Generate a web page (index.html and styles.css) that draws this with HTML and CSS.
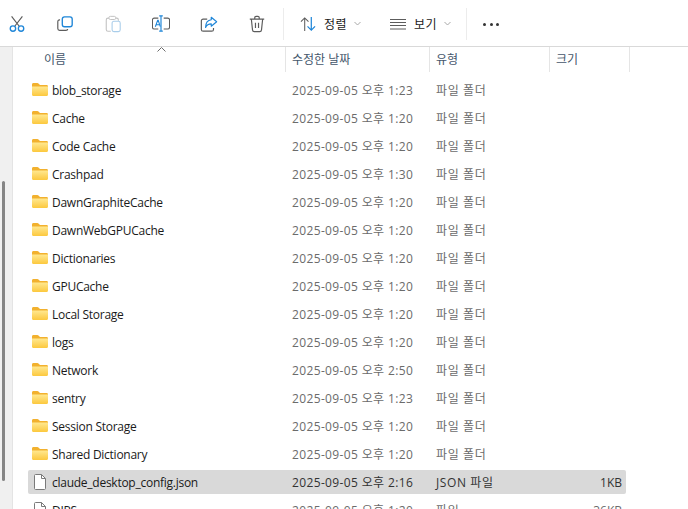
FILE: index.html
```html
<!DOCTYPE html>
<html lang="ko">
<head>
<meta charset="utf-8">
<title>탐색기</title>
<link rel="stylesheet" href="styles.css">
</head>
<body>
<svg class="defs" width="0" height="0" aria-hidden="true">
  <defs>
    <linearGradient id="fg" x1="0" y1="0" x2="0" y2="1"><stop offset="0" stop-color="#ffe88f"/><stop offset="1" stop-color="#fcc83e"/></linearGradient>
    <symbol id="folder" viewBox="0 0 16 13">
      <path d="M0 1.5C0 .7.6 0 1.4 0h4c.4 0 .8.2 1.1.5L8 2h6.6c.8 0 1.4.6 1.4 1.4V5H0z" fill="#f2b12e"/>
      <path d="M0 3.6h16v7.9c0 .8-.6 1.5-1.4 1.5H1.4C.6 13 0 12.300 0 11.500z" fill="url(#fg)"/>
    </symbol>
    <symbol id="file" viewBox="0 0 12 16">
      <path d="M.5 1.500c0-.6.4-1 1-1h6l4 4v10c0 .6-.4 1-1 1h-9c-.6 0-1-.4-1-1z" fill="#fff" stroke="#7a7a7a"/>
      <path d="M7.500.5v4h4" fill="none" stroke="#7a7a7a"/>
    </symbol>
  </defs>
</svg>
<header class="toolbar">
  <div class="btn"><svg width="18" height="18" viewBox="0 0 20 20" fill="none"><path d="M4 1.500 12.500 12.500M16 1.500 7.500 12.500" stroke="#5c5c5c" stroke-width="1.300"/><circle cx="5.500" cy="15" r="3" stroke="#1f86d8" stroke-width="1.500"/><circle cx="14.500" cy="15" r="3" stroke="#1f86d8" stroke-width="1.500"/></svg></div>
  <div class="btn"><svg width="18" height="18" viewBox="0 0 20 20" fill="none"><path d="M4.500 5.500H4c-1.300 0-2 .8-2 2V15c0 1.300.8 2 2 2h7c1.300 0 2-.7 2-1.500" stroke="#5c5c5c" stroke-width="1.300"/><rect x="7" y="2" width="11" height="11" rx="2.500" fill="#fff" stroke="#1f86d8" stroke-width="1.500"/></svg></div>
  <div class="btn"><svg width="18" height="18" viewBox="0 0 20 20" fill="none"><path d="M5.500 3.500H4.500c-1.200 0-2 .8-2 2V16c0 1.200.8 2 2 2h3M13 3.500h1c1.200 0 2 .8 2 2v1" stroke="#c2c2c2" stroke-width="1.200"/><rect x="5.500" y="1.500" width="7.500" height="3.500" rx="1.500" fill="#fff" stroke="#c2c2c2" stroke-width="1.100"/><rect x="9" y="7" width="9" height="11.500" rx="2" fill="#fff" stroke="#a9cdea" stroke-width="1.200"/></svg></div>
  <div class="btn"><svg width="18" height="18" viewBox="0 0 20 20" fill="none"><path d="M7 3.500H2.500C1.300 3.500.5 4.300.5 5.500v8c0 1.200.8 2 2 2H7M13 3.500h4.500c1.200 0 2 .8 2 2v8c0 1.200-.8 2-2 2H13" stroke="#5c5c5c" stroke-width="1.200"/><path d="M10 1v17M8 1h4M8 18h4" stroke="#1f86d8" stroke-width="1.300"/><path d="M3.700 13 6.300 6h.6l2.300 7M4.700 10.800h3.800" stroke="#1f86d8" stroke-width="1.200"/></svg></div>
  <div class="btn"><svg width="18" height="18" viewBox="0 0 20 20" fill="none"><path d="M8 4.500H3.500c-1.200 0-2 .8-2 2V16c0 1.200.8 2 2 2h9.500c1.200 0 2-.8 2-2v-1.500" stroke="#5c5c5c" stroke-width="1.300"/><path d="M12.500 2.500 18.500 7.500 12.500 12.500V9.800C9.500 9.800 7.500 11 6.200 13.800 6.300 9.200 8.500 5.700 12.500 5.300z" fill="#fff" stroke="#1f86d8" stroke-width="1.300" stroke-linejoin="round"/></svg></div>
  <div class="btn"><svg width="18" height="18" viewBox="0 0 20 20" fill="none"><path d="M2 4.500h16M7.500 4.500V3c0-.9.600-1.500 1.500-1.500h2c.9 0 1.500.6 1.500 1.500v1.500M3.700 4.500 5 16.500c.1 1.200.9 2 2 2h6c1.100 0 1.900-.8 2-2l1.300-12M8.300 8.500v6M11.700 8.500v6" stroke="#5c5c5c" stroke-width="1.300"/></svg></div>
  <span class="sep first"></span>
  <div class="menu sort">
    <svg width="16" height="16" viewBox="0 0 17 17" fill="none"><path d="M5 16V2M1 6l4-4 4 4" stroke="#5c5c5c" stroke-width="1.100"/><path d="M12 1v14M8 11l4 4 4-4" stroke="#1f86d8" stroke-width="1.300"/></svg>
    <span class="label">정렬</span>
    <svg class="chev" width="7" height="5" viewBox="0 0 7 5" fill="none"><path d="M.5 1 3.500 4 6.500 1" stroke="#a8a8a8"/></svg>
  </div>
  <div class="menu view">
    <svg width="16" height="11" viewBox="0 0 16 11" fill="none"><path d="M0 .5h16M0 3.500h16M0 6.500h16M0 10h16" stroke="#5c5c5c"/></svg>
    <span class="label">보기</span>
    <svg class="chev" width="7" height="5" viewBox="0 0 7 5" fill="none"><path d="M.5 1 3.500 4 6.500 1" stroke="#a8a8a8"/></svg>
  </div>
  <span class="sep second"></span>
  <div class="more"><i></i><i></i><i></i></div>
</header>
<div class="body">
  <aside class="rail"><div class="thumb"></div></aside>
  <main class="list">
    <svg class="caret" width="9" height="5" viewBox="0 0 9 5" fill="none"><path d="M.5 4.500l4-4 4 4" stroke="#6b6b6b"/></svg>
    <div class="head">
      <div class="h name">이름</div>
      <div class="h date">수정한 날짜</div>
      <div class="h type">유형</div>
      <div class="h size">크기</div>
    </div>
    <div class="rows">
      <div class="row"><svg class="ic"><use href="#folder"/></svg><span class="name">blob_storage</span><span class="date">2025-09-05 오후 1:23</span><span class="type">파일 폴더</span><span class="size"></span></div>
      <div class="row"><svg class="ic"><use href="#folder"/></svg><span class="name">Cache</span><span class="date">2025-09-05 오후 1:20</span><span class="type">파일 폴더</span><span class="size"></span></div>
      <div class="row"><svg class="ic"><use href="#folder"/></svg><span class="name">Code Cache</span><span class="date">2025-09-05 오후 1:20</span><span class="type">파일 폴더</span><span class="size"></span></div>
      <div class="row"><svg class="ic"><use href="#folder"/></svg><span class="name">Crashpad</span><span class="date">2025-09-05 오후 1:30</span><span class="type">파일 폴더</span><span class="size"></span></div>
      <div class="row"><svg class="ic"><use href="#folder"/></svg><span class="name">DawnGraphiteCache</span><span class="date">2025-09-05 오후 1:20</span><span class="type">파일 폴더</span><span class="size"></span></div>
      <div class="row"><svg class="ic"><use href="#folder"/></svg><span class="name">DawnWebGPUCache</span><span class="date">2025-09-05 오후 1:20</span><span class="type">파일 폴더</span><span class="size"></span></div>
      <div class="row"><svg class="ic"><use href="#folder"/></svg><span class="name">Dictionaries</span><span class="date">2025-09-05 오후 1:20</span><span class="type">파일 폴더</span><span class="size"></span></div>
      <div class="row"><svg class="ic"><use href="#folder"/></svg><span class="name">GPUCache</span><span class="date">2025-09-05 오후 1:20</span><span class="type">파일 폴더</span><span class="size"></span></div>
      <div class="row"><svg class="ic"><use href="#folder"/></svg><span class="name">Local Storage</span><span class="date">2025-09-05 오후 1:20</span><span class="type">파일 폴더</span><span class="size"></span></div>
      <div class="row"><svg class="ic"><use href="#folder"/></svg><span class="name">logs</span><span class="date">2025-09-05 오후 1:20</span><span class="type">파일 폴더</span><span class="size"></span></div>
      <div class="row"><svg class="ic"><use href="#folder"/></svg><span class="name">Network</span><span class="date">2025-09-05 오후 2:50</span><span class="type">파일 폴더</span><span class="size"></span></div>
      <div class="row"><svg class="ic"><use href="#folder"/></svg><span class="name">sentry</span><span class="date">2025-09-05 오후 1:23</span><span class="type">파일 폴더</span><span class="size"></span></div>
      <div class="row"><svg class="ic"><use href="#folder"/></svg><span class="name">Session Storage</span><span class="date">2025-09-05 오후 1:20</span><span class="type">파일 폴더</span><span class="size"></span></div>
      <div class="row"><svg class="ic"><use href="#folder"/></svg><span class="name">Shared Dictionary</span><span class="date">2025-09-05 오후 1:20</span><span class="type">파일 폴더</span><span class="size"></span></div>
      <div class="row selected"><svg class="ic file"><use href="#file"/></svg><span class="name">claude_desktop_config.json</span><span class="date">2025-09-05 오후 2:16</span><span class="type">JSON 파일</span><span class="size">1KB</span></div>
      <div class="row"><svg class="ic file"><use href="#file"/></svg><span class="name">DIPS</span><span class="date">2025-09-05 오후 1:20</span><span class="type">파일</span><span class="size">36KB</span></div>
    </div>
  </main>
</div>
</body>
</html>
```
FILE: styles.css
```css
* { box-sizing: border-box; }
html, body { margin: 0; height: 100%; overflow: hidden; background: #fff; }
body {
  width: 688px;
  height: 509px;
  font-family: "Open Sans", "Noto Sans CJK KR", sans-serif;
  font-size: 12px;
  color: #1a1a1a;
}
.defs { position: absolute; }

.toolbar {
  height: 47px;
  border-bottom: 1px solid #d9d9d9;
  display: flex;
  align-items: center;
  margin-left: -7px;
  padding-top: 2px;
}
.btn { width: 48px; height: 32px; display: flex; align-items: center; justify-content: center; flex: none; }
.sep { width: 1px; height: 32px; background: #ececec; flex: none; }
.sep.first { margin-left: 2px; }
.menu { display: flex; align-items: center; flex: none; }
.menu .label { font-size: 12px; letter-spacing: .4px; margin-left: 8px; width: 24px; white-space: nowrap; }
.chev { margin-left: 6px; margin-top: -1px; }
.sort { margin-left: 16px; }
.view { margin-left: 29px; }
.sep.second { margin-left: 15px; }
.more { display: flex; gap: 3.5px; margin-left: 16px; }
.more i { width: 3px; height: 3px; border-radius: 50%; background: #333; }

.body { display: flex; height: 462px; overflow: hidden; }
.rail { width: 13px; flex: none; background: #f0f0f0; border-right: 1px solid #e4e4e4; padding-top: 134px; }
.thumb { width: 3px; height: 300px; margin-left: 2px; background: #858585; border-radius: 2px; }

.list { position: relative; flex: 1; min-width: 0; }
.caret { position: absolute; left: 144px; top: 0; }
.head { display: flex; height: 25px; color: #44566b; }
.h { height: 25px; border-right: 1px solid #e5e5e5; padding-left: 6px; line-height: 26px; flex: none; }
.head .name { width: 273px; padding-left: 31px; }
.head .date { width: 144px; }
.head .type { width: 120px; }
.head .size { width: 80px; }

.rows { padding: 6px 0 0 15px; display: flex; flex-direction: column; gap: 4px; }
.row {
  width: 598px;
  height: 24px;
  flex: none;
  display: flex;
  align-items: center;
  padding-left: 4px;
  border-radius: 2px;
  color: #6b6b6b;
}
.row .ic { width: 16px; height: 13px; flex: none; margin-top: -2px; }
.row .ic.file { width: 12px; height: 16px; margin: 0 2px; }
.row .name { width: 240px; margin-left: 4px; color: #1a1a1a; flex: none; white-space: nowrap; letter-spacing: -.26px; }
.row .date { width: 144px; flex: none; letter-spacing: .36px; white-space: nowrap; }
.row .type { width: 120px; flex: none; letter-spacing: .6px; }
.row .size { width: 66px; flex: none; text-align: right; }
.row.selected { background: #d9d9d9; color: #333; }
```
